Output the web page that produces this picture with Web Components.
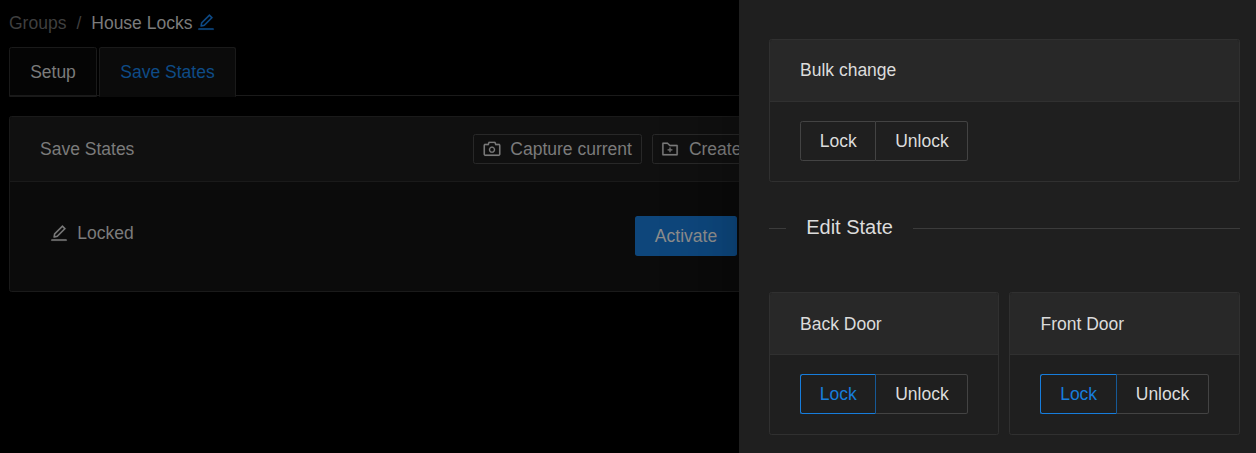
<!DOCTYPE html>
<html lang="en">
<head>
<meta charset="utf-8">
<title>House Locks</title>
<style>
html,body{margin:0;height:100%;background:#000;overflow:hidden}
body{font:17.5px/27.5px "Liberation Sans",Arial,sans-serif;position:relative;color:#7b7b7b}
main{padding:10px 0 0 9px;width:1247px;box-sizing:border-box}
.crumb-edit{color:#0e4b87;margin:2px 0 0 3.2px}
.activate{align-self:flex-start;margin:34px 0 0 501px}
.row{display:flex;height:109px}
.locked{display:flex;gap:8.7px;padding:38px 0 0 38.6px;width:85.4px}
.locked ui-icon{margin-top:3px}
</style>
</head>
<body>
<main>
  <ui-breadcrumb><span slot="parent">Groups</span>House Locks<ui-icon class="crumb-edit" slot="action" name="edit"></ui-icon></ui-breadcrumb>
  <ui-tabs><ui-tab style="width:86px">Setup</ui-tab><ui-tab active style="width:135px">Save States</ui-tab></ui-tabs>
  <ui-card style="--head:64px;--head-bg:#101010;--bg:#0b0b0b;--line:#1a1a1a;--title:423px;--drop:1px;margin-top:20px">
    <span slot="title">Save States</span>
    <ui-tool slot="extra" style="width:167px"><ui-icon slot="icon" name="camera"></ui-icon>Capture current</ui-tool>
    <ui-tool slot="extra" style="width:130px;--lead:6.6px;--gap:9.3px"><ui-icon slot="icon" name="folder"></ui-icon>Create new</ui-tool>
    <div class="row">
      <div class="locked"><ui-icon name="edit"></ui-icon><span>Locked</span></div>
      <ui-primary class="activate">Activate</ui-primary>
    </div>
  </ui-card>
</main>
<ui-drawer>
  <ui-card><span slot="title">Bulk change</span><lock-switch></lock-switch></ui-card>
  <ui-divider>Edit State</ui-divider>
  <div slot="grid"><ui-card style="width:230px;--drop:2px"><span slot="title">Back Door</span><lock-switch value="lock"></lock-switch></ui-card></div>
  <div slot="grid"><ui-card style="width:231px;--drop:2px;--indent:30.5px"><span slot="title">Front Door</span><lock-switch value="lock" style="--first:77px;--nudge:.3px;--nudge-end:0px"></lock-switch></ui-card></div>
</ui-drawer>
<script>
const define = (name, css, html) => customElements.define(name, class extends HTMLElement {
  constructor() {
    super();
    this.attachShadow({mode: 'open'}).innerHTML = `<style>${css}</style>${html}`;
  }
});

const icons = {
  edit: 'M257.7 752c2 0 4-.2 6-.5L431.9 722c2-.4 3.9-1.3 5.3-2.8l423.9-423.9a9.96 9.96 0 000-14.1L694.9 114.9c-1.9-1.9-4.4-2.9-7.1-2.9s-5.2 1-7.1 2.9L256.8 538.8c-1.5 1.5-2.4 3.3-2.8 5.3l-29.5 168.2a33.5 33.5 0 009.4 29.8c6.6 6.4 14.9 9.9 23.8 9.9zm67.4-174.4L687.8 215l73.3 73.3-362.7 362.6-88.9 15.7 15.6-89zM880 836H144c-17.7 0-32 14.3-32 32v36c0 4.4 3.6 8 8 8h784c4.4 0 8-3.6 8-8v-36c0-17.7-14.3-32-32-32z',
  camera: 'M864 248H728l-32.4-90.8a32.07 32.07 0 00-30.2-21.2H358.6c-13.5 0-25.6 8.5-30.1 21.2L296 248H160c-44.2 0-80 35.8-80 80v456c0 44.2 35.8 80 80 80h704c44.2 0 80-35.8 80-80V328c0-44.2-35.8-80-80-80zm8 536c0 4.4-3.6 8-8 8H160c-4.4 0-8-3.6-8-8V328c0-4.4 3.6-8 8-8h186.7l17.1-47.8 22.9-64.2h250.5l22.9 64.2 17.1 47.8H864c4.4 0 8 3.6 8 8v456zM512 384c-88.4 0-160 71.6-160 160s71.6 160 160 160 160-71.6 160-160-71.6-160-160-160zm0 256c-53 0-96-43-96-96s43-96 96-96 96 43 96 96-43 96-96 96z',
  folder: 'M484 443.1V528h-84.5c-4.1 0-7.5 3.1-7.5 7v42c0 3.8 3.4 7 7.5 7H484v84.9c0 3.9 3.2 7.1 7 7.1h42c3.9 0 7-3.2 7-7.1V584h84.5c4.1 0 7.5-3.2 7.5-7v-42c0-3.9-3.4-7-7.5-7H540v-84.9c0-3.9-3.1-7.1-7-7.1h-42c-3.8 0-7 3.2-7 7.1zm396-144.7H521L403.7 186.2a8.15 8.15 0 00-5.5-2.2H144c-17.7 0-32 14.3-32 32v592c0 17.7 14.3 32 32 32h736c17.7 0 32-14.3 32-32V330.4c0-17.7-14.3-32-32-32zM840 768H184V256h188.5l119.6 114.4H840V768z'
};
customElements.define('ui-icon', class extends HTMLElement {
  connectedCallback() {
    if (this.shadowRoot) return;
    this.attachShadow({mode: 'open'}).innerHTML = `<style>:host{display:block;width:20px;height:20px;flex:none}svg{display:block}</style>
      <svg width="20" height="20" viewBox="0 0 1024 1024" fill="currentColor" stroke="currentColor" stroke-width="8"><path d="${icons[this.getAttribute('name')]}"/></svg>`;
  }
});

define('ui-breadcrumb', `:host{display:flex;height:27px}.p,.s{color:#3f3f3f}.s{margin:0 10px}`,
  `<span class="p"><slot name="parent"></slot></span><span class="s">/</span><span><slot></slot></span><slot name="action"></slot>`);

define('ui-tabs', `:host{display:flex;gap:2px;height:48px;margin-top:10px;border-bottom:1px solid #1a1a1a}`, `<slot></slot>`);

define('ui-tab', `:host{display:grid;place-items:center;height:46px;padding-top:2px;border:1px solid #1a1a1a;border-radius:2.5px 2.5px 0 0;background:#050505;box-shadow:inset 0 -1px #1a1a1a}
  :host([active]){background:#0b0b0b;color:#0e4b87;border-bottom-color:#0b0b0b;box-shadow:none}`, `<slot></slot>`);

define('ui-card', `:host{display:block;box-sizing:border-box;border:1px solid var(--line,#303030);border-radius:2.5px;background:var(--bg,#1f1f1f)}
  header{display:flex;align-items:center;gap:10px;height:var(--head,61px);padding-left:var(--indent,30px);border-bottom:1px solid var(--line,#303030);background:var(--head-bg,#282828);border-radius:2.5px 2.5px 0 0}
  .t{width:var(--title,auto);flex:none;padding-top:var(--drop,0)}`,
  `<header><div class="t"><slot name="title"></slot></div><slot name="extra"></slot></header><slot></slot>`);

define('ui-tool', `:host{display:flex;align-items:center;gap:var(--gap,8.8px);height:28px;border:1px solid #282828;border-radius:2.5px;white-space:nowrap;flex:none}
  ::slotted(ui-icon){margin-left:var(--lead,7.5px)}span{padding-top:1px}`, `<slot name="icon"></slot><span><slot></slot></span>`);

define('ui-primary', `:host{display:grid;place-items:center;box-sizing:border-box;padding-top:1px;width:102px;height:40px;background:#0e467b;border-radius:2.5px;color:#8c8c8c;flex:none}`, `<slot></slot>`);

define('ui-drawer', `:host{position:absolute;inset:0 0 0 auto;width:517px;box-sizing:border-box;padding:39px 16px 0 30px;background:#1f1f1f;color:#dcdcdc;
    box-shadow:-7.5px 0 20px -10px rgba(0,0,0,.16),-11px 0 35px rgba(0,0,0,.08),-15px 0 60px 20px rgba(0,0,0,.05)}
  .g{display:flex;gap:10px}`, `<slot></slot><div class="g"><slot name="grid"></slot></div>`);

define('ui-divider', `:host{display:flex;align-items:center;font-size:20px;line-height:32px;height:32px;margin:30px 0 48px;color:#dcdcdc}
  i{height:1px;background:#3b3b3b;width:17px;margin-top:1px}i:last-child{flex:1}span{padding:0 20px 0 20.2px;margin:-2px -.2px 0 0}`,
  `<i></i><span><slot></slot></span><i></i>`);

define('lock-switch', `:host{display:flex;padding:19px 0 20px 30px;height:40px}
  div{box-sizing:border-box;height:40px;border:1px solid #434343;display:grid;place-items:center;padding:1px 0 0 var(--nudge,.6px)}
  .l{width:var(--first,76px);border-radius:2.5px 0 0 2.5px}
  .u{width:92px;border-left:0;border-radius:0 2.5px 2.5px 0;padding-left:var(--nudge-end,.9px)}
  :host([value=lock]) .l{border-color:#177ddc;border-right-color:#165996;color:#177ddc}`,
  `<div class="l">Lock</div><div class="u">Unlock</div>`);
</script>
</body>
</html>
